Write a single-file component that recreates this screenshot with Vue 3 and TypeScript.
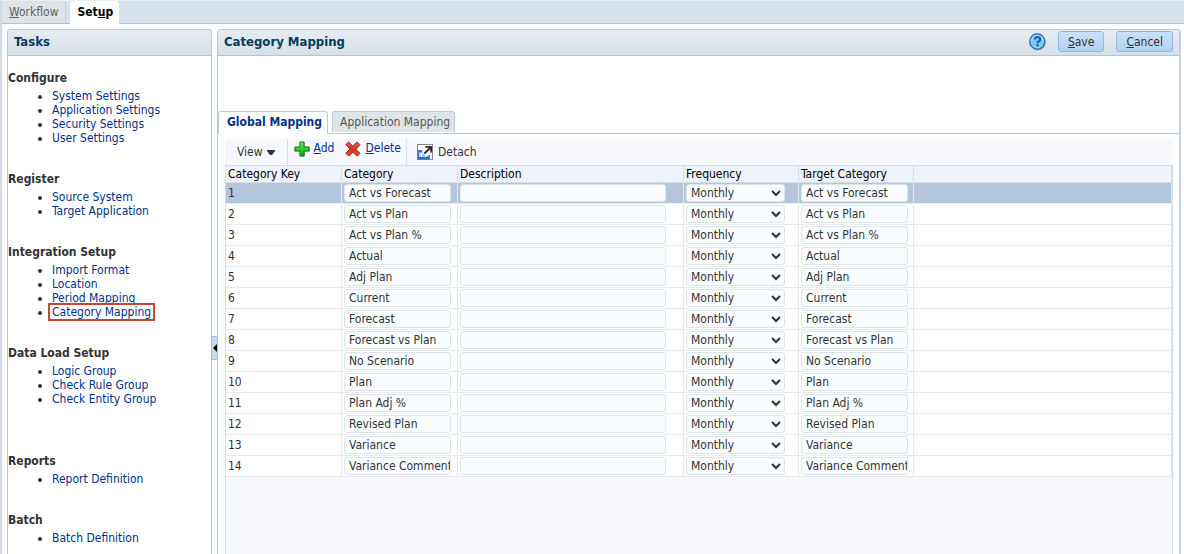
<script setup lang="ts">
import { ref } from 'vue'

interface TaskGroup {
  title: string
  links: string[]
  spaced?: boolean
}

interface Mapping {
  key: number
  category: string
  description: string
  frequency: string
  target: string
}

const groups: TaskGroup[] = [
  { title: 'Configure', links: ['System Settings', 'Application Settings', 'Security Settings', 'User Settings'] },
  { title: 'Register', links: ['Source System', 'Target Application'] },
  { title: 'Integration Setup', links: ['Import Format', 'Location', 'Period Mapping', 'Category Mapping'] },
  { title: 'Data Load Setup', links: ['Logic Group', 'Check Rule Group', 'Check Entity Group'], spaced: true },
  { title: 'Reports', links: ['Report Definition'] },
  { title: 'Batch', links: ['Batch Definition'] },
]

const currentLink = 'Category Mapping'
const selectedKey = ref(1)

const rows = ref<Mapping[]>(
  [
    'Act vs Forecast',
    'Act vs Plan',
    'Act vs Plan %',
    'Actual',
    'Adj Plan',
    'Current',
    'Forecast',
    'Forecast vs Plan',
    'No Scenario',
    'Plan',
    'Plan Adj %',
    'Revised Plan',
    'Variance',
    'Variance Comment',
  ].map((name, i) => ({
    key: i + 1,
    category: name,
    description: '',
    frequency: 'Monthly',
    target: name,
  })),
)
</script>

<template>
  <div class="app">
    <nav class="top-tabs">
      <button type="button" class="top-tab"><u>W</u>orkflow</button>
      <button type="button" class="top-tab active">Set<u>u</u>p</button>
    </nav>

    <div class="body">
      <aside class="panel tasks">
        <header class="panel-head"><h2>Tasks</h2></header>
        <div class="groups">
          <section v-for="g in groups" :key="g.title" class="group" :class="{ spaced: g.spaced }">
            <h3>{{ g.title }}</h3>
            <ul>
              <li v-for="l in g.links" :key="l">
                <a href="#" :class="{ current: l === currentLink }">{{ l }}</a>
              </li>
            </ul>
          </section>
        </div>
      </aside>

      <div class="splitter">
        <button type="button" class="collapse" aria-label="Collapse Tasks">
          <svg width="4" height="8" viewBox="0 0 4 8"><path d="M4 0v8L0 4z" fill="#000" /></svg>
        </button>
      </div>

      <main class="panel content">
        <header class="panel-head">
          <h2>Category Mapping</h2>
          <div class="actions">
            <button type="button" class="help" aria-label="Help">
              <svg width="17" height="18" viewBox="0 0 17 18">
                <defs>
                  <radialGradient id="helpFill" cx="0.5" cy="0.9" r="0.9">
                    <stop offset="0" stop-color="#7fe3ff" />
                    <stop offset="0.5" stop-color="#7cc0f7" />
                    <stop offset="1" stop-color="#d2e8fc" />
                  </radialGradient>
                </defs>
                <circle cx="9" cy="9.6" r="7.8" fill="#7d8ea2" opacity="0.6" />
                <circle cx="8.3" cy="8.6" r="7.600" fill="url(#helpFill)" stroke="#2c70c0" stroke-width="1.400" />
                <path d="M5.700 6.500C5.700 4.900 7 4.200 8.400 4.200c1.600 0 2.700.8 2.700 2.200 0 1.900-2.500 1.800-2.500 3.900" fill="none" stroke="#1f5cae" stroke-width="2.200" />
                <rect x="7.500" y="11.200" width="2.200" height="2.200" fill="#1f5cae" />
              </svg>
            </button>
            <button type="button" class="action"><u>S</u>ave</button>
            <button type="button" class="action"><u>C</u>ancel</button>
          </div>
        </header>

        <div class="map-tabs">
          <button type="button" class="map-tab active">Global Mapping</button>
          <button type="button" class="map-tab">Application Mapping</button>
        </div>

        <div class="map-body">
          <div class="toolbar">
            <button type="button" class="tool view">
              View
              <svg width="8" height="5" viewBox="0 0 8 5"><path d="M0 0h8v1L5 5H3L0 1z" fill="#333" /></svg>
            </button>
            <div class="tool-group">
              <button type="button" class="tool link">
                <svg width="16" height="17" viewBox="0 0 16 17">
                  <defs>
                    <linearGradient id="addFill" x1="0" y1="0" x2="0" y2="1">
                      <stop offset="0" stop-color="#8fe97a" />
                      <stop offset="0.45" stop-color="#35d32f" />
                      <stop offset="1" stop-color="#18a81a" />
                    </linearGradient>
                  </defs>
                  <path d="M6.500 1.600h4v5h5v4h-5v5h-4v-5h-5v-4h5z" fill="#555" opacity="0.5" />
                  <path d="M6 1h4v5h5v4h-5v5H6v-5H1V6h5z" fill="url(#addFill)" stroke="#12761a" stroke-width="1.200" stroke-linejoin="round" />
                </svg>
                <span><u>A</u>dd</span>
              </button>
              <button type="button" class="tool link">
                <svg width="16" height="17" viewBox="0 0 16 17">
                  <defs>
                    <linearGradient id="delFill" x1="0" y1="0" x2="0" y2="1">
                      <stop offset="0" stop-color="#ee6a50" />
                      <stop offset="0.5" stop-color="#d8301c" />
                      <stop offset="1" stop-color="#f0582c" />
                    </linearGradient>
                  </defs>
                  <path d="M4.500 1.600l4 4 4-4 3 2.800-4 4.100 4 4.200-3 2.800-4-4-4 4-3-2.800 4-4.200-4-4.100z" fill="#555" opacity="0.5" />
                  <path d="M3.600 1L7.700 5l4.200-4L14.800 3.600 10.500 8l4.300 4.300L12 15 7.700 10.900 3.600 15 .8 12.300 5 8 .8 3.600z" fill="url(#delFill)" stroke="#9e2415" stroke-width="1" stroke-linejoin="round" />
                </svg>
                <span><u>D</u>elete</span>
              </button>
            </div>
            <button type="button" class="tool detach">
              <svg width="17" height="17" viewBox="0 0 17 17">
                <defs>
                  <linearGradient id="gridFill" x1="0" y1="0" x2="1" y2="1">
                    <stop offset="0" stop-color="#dce8fa" />
                    <stop offset="1" stop-color="#6f9be0" />
                  </linearGradient>
                </defs>
                <rect x="0.500" y="0.500" width="15" height="15" fill="#fff" stroke="#111" stroke-dasharray="1 1" />
                <rect x="1.500" y="6.500" width="11" height="8.500" fill="url(#gridFill)" stroke="#3d73cc" />
                <rect x="1" y="6" width="6" height="2.500" fill="#3d73cc" />
                <path d="M4.500 9v5M8.500 9v5" stroke="#fff" fill="none" />
                <rect x="1" y="13" width="12" height="2" fill="#3469c4" />
                <path d="M6 2h9v9h-3L9 12 5 9z" fill="#f4f7fc" />
                <path d="M8.500 2H15v6.500h-1.800V5.200L8 10.300 6.600 9l5.200-5.200H8.500z" fill="#2b2b2b" />
              </svg>
              <span>Detach</span>
            </button>
          </div>

          <div class="grid-wrap">
            <table>
              <colgroup>
                <col class="c-key" />
                <col class="c-cat" />
                <col class="c-desc" />
                <col class="c-freq" />
                <col class="c-target" />
                <col />
              </colgroup>
              <thead>
                <tr>
                  <th>Category Key</th>
                  <th>Category</th>
                  <th>Description</th>
                  <th>Frequency</th>
                  <th>Target Category</th>
                  <th></th>
                </tr>
              </thead>
              <tbody>
                <tr v-for="r in rows" :key="r.key" :class="{ selected: r.key === selectedKey }" @click="selectedKey = r.key">
                  <td>{{ r.key }}</td>
                  <td><input v-model="r.category" type="text" class="field" :aria-label="`Category ${r.key}`" /></td>
                  <td><input v-model="r.description" type="text" class="field wide" :aria-label="`Description ${r.key}`" /></td>
                  <td>
                    <select v-model="r.frequency" class="field pick" :aria-label="`Frequency ${r.key}`">
                      <option>Monthly</option>
                      <option>Quarterly</option>
                      <option>Yearly</option>
                    </select>
                  </td>
                  <td><input v-model="r.target" type="text" class="field" :aria-label="`Target Category ${r.key}`" /></td>
                  <td></td>
                </tr>
              </tbody>
            </table>
          </div>
        </div>
      </main>
    </div>
  </div>
</template>

<style>
body {
  margin: 0;
  background: #fff;
}
</style>

<style scoped>
* {
  box-sizing: border-box;
}

.app {
  display: flex;
  flex-direction: column;
  min-height: 100vh;
  border-left: 2px solid #d3dce6;
  font: 12px/14px Tahoma, "DejaVu Sans Condensed", "DejaVu Sans", sans-serif;
  color: #333;
}

button,
input,
select {
  font: inherit;
  color: inherit;
  margin: 0;
}

button {
  padding: 0;
  border: 0;
  background: none;
  white-space: nowrap;
  cursor: pointer;
}

h2,
h3,
ul {
  margin: 0;
  padding: 0;
}

.top-tabs {
  display: flex;
  align-items: flex-end;
  gap: 4px;
  height: 24px;
  background: #d6e2ec;
  border-top: 1px solid #e9eff5;
  border-bottom: 1px solid #b6c3cf;
}

.top-tab {
  height: 22px;
  padding: 0 6px 0 7px;
  border-right: 1px solid #c3ced8;
  border-radius: 3px 3px 0 0;
  background: #dfe4e7;
  color: #5a5f64;
}

.top-tab.active {
  height: 23px;
  margin-bottom: -1px;
  padding: 0 6px 1px 8px;
  border: 0;
  background: #fff;
  color: #000;
  font-weight: bold;
}

.body {
  display: flex;
  flex: 1;
  padding: 5px 3px 0 5px;
}

.panel {
  border: 1px solid #b9c6d2;
  border-bottom: 0;
  border-radius: 4px 4px 0 0;
}

.panel-head {
  display: flex;
  align-items: center;
  justify-content: space-between;
  height: 26px;
  padding: 0 6px 2px;
  border-bottom: 1px solid #b6c4d0;
  border-radius: 3px 3px 0 0;
  background: linear-gradient(#e6ecf2, #d7dfe8);
}

.panel-head h2 {
  font-size: 13px;
  line-height: 16px;
  color: #003d5b;
}

.tasks {
  flex: 0 0 205px;
}

.groups {
  padding: 15px 0 9px;
}

.group {
  margin-bottom: 27px;
}

.group.spaced {
  margin-bottom: 48px;
}

.group:last-child {
  margin-bottom: 0;
}

.group h3 {
  margin-bottom: 4px;
  font-size: 12px;
  line-height: 14px;
}

.group ul {
  padding-left: 44px;
}

a {
  color: #003286;
  text-decoration: none;
}

a.current {
  margin: 0 -2px;
  padding: 0 2px;
  outline: 2px solid #c74634;
}

.splitter {
  display: flex;
  flex: 0 0 5px;
  align-items: flex-start;
}

.collapse {
  display: flex;
  align-items: center;
  justify-content: center;
  flex: 0 0 7px;
  height: 24px;
  margin: 307px -1px 0;
  border: 1px solid #9dbfe0;
  background: #c3dcf6;
}

.content {
  display: flex;
  flex-direction: column;
  flex: 1;
  min-width: 0;
  border-right: 2px solid #c5d0dc;
}

.actions {
  display: flex;
  align-items: center;
  gap: 12px;
}

.help {
  display: flex;
}

.action {
  height: 21px;
  padding: 0 9px;
  border: 1px solid #94b6d8;
  border-radius: 3px;
  background: linear-gradient(#cbe1f8, #b1d2f3);
}

.map-tabs {
  display: flex;
  align-items: flex-end;
  height: 23px;
  margin-top: 55px;
  background: linear-gradient(#b9c6d2, #b9c6d2) left bottom / 100% 1px no-repeat;
}

.map-tab {
  height: 21px;
  margin: 0 0 2px 4px;
  padding: 0 4px 0 7px;
  border: 1px solid #bccad6;
  border-bottom: 0;
  border-radius: 3px 3px 0 0;
  background: #dfe4e8;
  color: #555;
}

.map-tab.active {
  height: 23px;
  margin: 0;
  padding: 0 5px 2px 8px;
  background: #fff;
  color: #003286;
  font-weight: bold;
}

.map-body {
  display: flex;
  flex-direction: column;
  flex: 1;
  padding: 5px 6px 0 7px;
}

.toolbar {
  display: flex;
  height: 26px;
  background: #f7f8fd;
}

.tool {
  display: flex;
  align-items: center;
  gap: 4px;
}

.view {
  padding: 0 12px;
  border-right: 1px solid #d9e0e8;
}

.tool-group {
  display: flex;
  align-items: flex-start;
  gap: 11px;
  padding: 2px 5px 0 6px;
  border-right: 1px solid #d9e0e8;
}

.link {
  align-items: flex-start;
  color: #003286;
}

.detach {
  padding-left: 10px;
}

.grid-wrap {
  flex: 1;
  border: 1px solid #d3dde7;
  border-bottom: 0;
  background: #f7f8fd;
}

table {
  width: 100%;
  table-layout: fixed;
  border-collapse: separate;
  border-spacing: 0;
}

.c-key,
.c-cat {
  width: 116px;
}

.c-desc {
  width: 226px;
}

.c-freq,
.c-target {
  width: 115px;
}

th {
  height: 17px;
  padding: 0 2px;
  border-right: 1px solid #d6dfe8;
  border-bottom: 1px solid #d6dfe8;
  background: #eef2fa;
  color: #000;
  font-weight: normal;
  text-align: left;
}

td {
  height: 21px;
  padding: 0 2px;
  border-right: 1px solid #e4e8ec;
  border-bottom: 1px solid #e8ebee;
  background: #fff;
  vertical-align: middle;
}

.selected td {
  background: #b4c6dc;
}

.field {
  display: block;
  width: 107px;
  height: 18px;
  padding: 0 0 0 4px;
  border: 1px solid #dde4ea;
  border-radius: 3px;
  background: #f9fdff;
  outline: 0;
}

.field.wide {
  width: 206px;
}

.field.pick {
  width: 99px;
  padding: 0;
}
</style>
